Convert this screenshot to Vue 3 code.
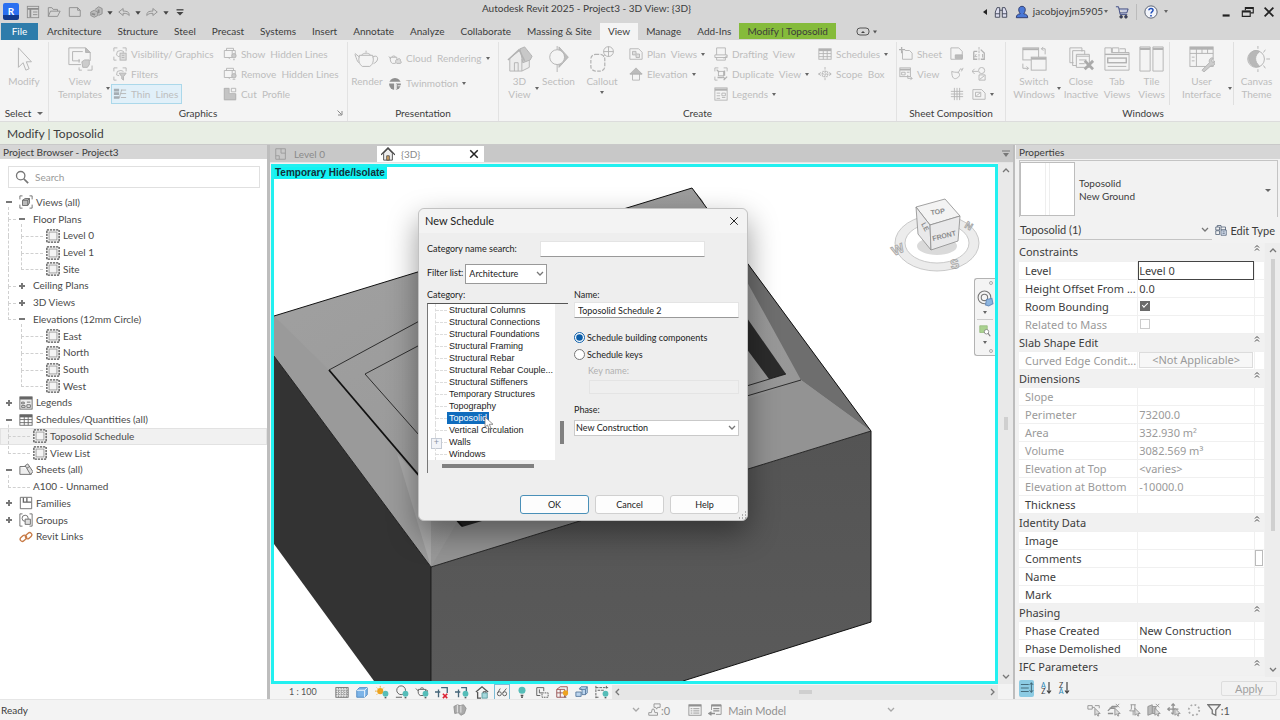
<template>
  <div class="app">
    <!-- title bar -->
    <header class="titlebar">
      <div class="quick">
        <button class="logo" aria-label="Revit">R</button>
        <button v-for="q in quick" :key="q.icon" class="flat" :class="q.cls" :aria-label="q.icon">
          <svg viewBox="0 0 16 16" v-html="icons[q.icon]"></svg>
        </button>
      </div>
      <div class="apptitle">Autodesk Revit 2025 - Project3 - 3D View: {3D}</div>
      <div class="account">
        <i class="left-arrow"></i>
        <button class="flat" aria-label="Find"><svg viewBox="0 0 16 16" v-html="icons.binoculars"></svg></button>
        <button class="flat user">
          <svg viewBox="0 0 16 16" v-html="icons.user"></svg>
          <span>jacobjoyjm5905</span><i class="caret"></i>
        </button>
        <button class="flat cart" aria-label="Cart"><svg viewBox="0 0 16 16" v-html="icons.cart"></svg></button>
        <i class="bar"></i>
        <button class="flat help" aria-label="Help"><svg viewBox="0 0 16 16" v-html="icons.help"></svg><i class="caret"></i></button>
        <div class="wincontrols">
          <button class="flat" aria-label="Minimize"><svg viewBox="0 0 16 16" v-html="icons.minimize"></svg></button>
          <button class="flat" aria-label="Restore"><svg viewBox="0 0 16 16" v-html="icons.restore"></svg></button>
          <button class="flat" aria-label="Close"><svg viewBox="0 0 16 16" v-html="icons.close"></svg></button>
        </div>
      </div>
    </header>

    <!-- ribbon tabs -->
    <nav class="tabs">
      <button v-for="t in tabs" :key="t" :class="{ file: t === 'File', active: t === activeTab, context: t === 'Modify | Toposolid' }" @click="activeTab = t">{{ t }}</button>
      <button class="collapse" aria-label="Collapse ribbon">
        <svg viewBox="0 0 22 10"><rect x="1" y="1" width="12" height="7" rx="3" fill="none" stroke="#555" /><path d="M5 6l2-2 2 2z" fill="#444" /><path d="M17 3.5h4l-2 3z" fill="#555" /></svg>
      </button>
    </nav>

    <!-- ribbon -->
    <section class="ribbon">
      <div v-for="g in groups" :key="g.name" class="group" :class="{ last: g.name === 'Windows' }" :style="{ flexBasis: g.w + 'px' }">
        <div class="cols">
          <div v-for="(c, i) in g.cols" :key="i" class="col" :class="[c.type, { ruled: c.ruled }]" :style="{ flexBasis: c.w + 'px' }">
            <button v-for="b in c.items" :key="b.icon" :class="{ on: b.on }" :aria-label="b.label || b.icon">
              <svg v-if="c.type.startsWith('big')" viewBox="0 0 28 28" v-html="icons[b.icon]"></svg>
              <svg v-else viewBox="0 0 16 16" v-html="icons[b.icon]"></svg>
              <span v-if="b.label">{{ b.label }}</span>
              <i v-if="b.caret" class="caret"></i>
            </button>
          </div>
        </div>
        <div class="gname">
          {{ g.name }}<i v-if="g.name === 'Select'" class="caret wide"></i>
          <svg v-if="g.name === 'Graphics'" class="launcher" viewBox="0 0 6 6"><path d="M.5 .5l4 4M5 1v4H1" fill="none" stroke="#888" /></svg>
        </div>
      </div>
    </section>

    <div class="options">Modify | Toposolid</div>

    <main class="work">
      <!-- project browser -->
      <aside class="browser">
        <h2>Project Browser - Project3</h2>
        <label class="search">
          <svg viewBox="0 0 16 16"><circle cx="6.5" cy="6.5" r="4.8" fill="none" stroke="#777" stroke-width="1.5" /><path d="M10 10l5 5" stroke="#777" stroke-width="2" /></svg>
          <input type="text" placeholder="Search" aria-label="Search">
        </label>
        <ul class="tree">
          <li v-for="n in nodes" :key="n.text" :class="['l' + n.level, { thru: n.thru, sel: n.sel }]">
            <b v-if="n.mark" :class="n.mark"></b>
            <svg v-if="n.icon" viewBox="0 0 16 16" v-html="icons[n.icon]"></svg>
            <span>{{ n.text }}</span>
          </li>
        </ul>
      </aside>

      <!-- drawing area -->
      <section class="viewarea">
        <div class="viewtabs">
          <button class="vt"><svg viewBox="0 0 16 16" v-html="icons.plan"></svg><span>Level 0</span></button>
          <button class="vt active"><svg viewBox="0 0 16 16" v-html="icons.home"></svg><span>{3D}</span><svg class="x" viewBox="0 0 16 16" v-html="icons.close"></svg></button>
          <svg class="more" viewBox="0 0 8 8"><path d="M0 1h8" stroke="#777" /><path d="M1 3h6L4 7z" fill="#777" stroke="none" /></svg>
        </div>
        <div class="viewrow">
          <div class="canvas">
            <svg class="model" viewBox="274 167 722 514" preserveAspectRatio="xMinYMin slice">
              <defs>
                <linearGradient id="top" x1="0" y1="0" x2="1" y2="1">
                  <stop offset="0" stop-color="#a2a2a2" /><stop offset="1" stop-color="#929292" />
                </linearGradient>
                <linearGradient id="front" x1="0" y1="0" x2="0" y2="1">
                  <stop offset="0" stop-color="#545454" /><stop offset="1" stop-color="#5a5a5a" />
                </linearGradient>
              </defs>
              <path d="M274 316L692 188 871 431 431 567 274 356z" fill="url(#top)" />
              <path d="M274 316L329 370 418 478 431 567 274 356z" fill="#9a9a9a" />
              <path d="M397 454L431 490V567z" fill="#a8a8a8" />
              <path d="M692 188L871 431 801 380 702 200z" fill="#6e6e6e" />
              <path d="M740 308L786 374 769 379 740 340z" fill="#2b2b2b" />
              <path d="M801 380L871 431 431 567 470 500z" fill="#939393" />
              <path d="M274 356L431 567V681H374L274 544z" fill="#333" />
              <path d="M431 567L871 431V622L683 681H431z" fill="url(#front)" />
              <path d="M454 518l8 9 20-6z" fill="#222" />
              <g fill="none" stroke="#111">
                <path d="M274 316L692 188 871 431V622L683 681" />
                <path d="M274 356L431 567 871 431M431 567V681" stroke-width=".8" />
                <path d="M460 299L329 370M801 380L740 398M786 374L740 388" stroke-width=".8" />
                <path d="M329 370L462 526" stroke-width="1.8" />
                <path d="M450 329L365 374 450 470" stroke-width=".8" />
              </g>
            </svg>
            <span class="badge">Temporary Hide/Isolate</span>

            <svg class="cube" viewBox="-8 0 104 84">
              <path fill-rule="evenodd" d="M4 46a42 28 0 1 0 84 0a42 28 0 1 0-84 0M14 46a32 20 0 1 1 64 0a32 20 0 1 1-64 0" fill="#ececec" stroke="#bdbdbd" stroke-width=".8" />
              <ellipse cx="46" cy="49" rx="20" ry="9" fill="#dadada" stroke="none" />
              <g fill="#e9e9ea" stroke="#8c8c8c" stroke-width=".8">
                <path d="M25 10L54 2 69 19 39 28z" fill="#f3f3f3" />
                <path d="M25 10L39 28 40 53 27 37z" />
                <path d="M39 28L69 19 67 44 40 53z" />
              </g>
              <g class="cubetext">
                <text x="40" y="18" transform="rotate(-8 40 18)">TOP</text>
                <text x="42" y="44" transform="rotate(-14 42 44)">FRONT</text>
                <text x="30" y="27" transform="rotate(62 30 27)">LE</text>
                <text x="3" y="59" class="dir" transform="rotate(-24 3 59)">W</text>
                <text x="60" y="72" class="dir" transform="rotate(-8 60 72)">S</text>
                <text x="73" y="30" class="dir small" transform="rotate(30 73 30)">N</text>
              </g>
            </svg>

            <div class="navbar">
              <i class="dot"></i>
              <button class="flat" aria-label="Steering wheel"><svg viewBox="0 0 16 16" v-html="icons.wheel"></svg></button>
              <i class="caret"></i><hr>
              <button class="flat zoom" aria-label="Zoom region"><svg viewBox="0 0 16 16" v-html="icons.zoom"></svg></button>
              <i class="caret"></i>
              <i class="dot"></i>
            </div>
          </div>
          <div class="vscroll"><svg viewBox="0 0 10 10" v-html="chevron.up"></svg><i></i><svg viewBox="0 0 10 10" v-html="chevron.down"></svg></div>
        </div>
        <div class="viewcontrols">
          <span class="scale">1 : 100</span>
          <button v-for="v in viewControls" :key="v" class="flat" :class="{ boxed: v === 'glasses' }" :aria-label="v"><svg viewBox="0 0 16 16" v-html="icons[v]"></svg></button>
          <div class="hscroll"><svg viewBox="0 0 10 10" v-html="chevron.left"></svg><i></i><svg viewBox="0 0 10 10" v-html="chevron.right"></svg></div>
        </div>
      </section>

      <!-- properties palette -->
      <aside class="props">
        <h2>Properties</h2>
        <div class="typebox">
          <div class="thumb"><i></i></div>
          <p>Toposolid<br>New Ground</p>
          <i class="caret wide"></i>
        </div>
        <div class="instance">
          <button class="pick"><span>Toposolid (1)</span><svg viewBox="0 0 10 10" v-html="chevron.down"></svg></button>
          <button class="edit"><svg viewBox="0 0 16 16" v-html="icons.edittype"></svg>Edit Type</button>
        </div>
        <div class="sheet">
          <table>
            <tbody>
              <tr v-for="p in params" :key="p.name" :class="{ head: p.head, dim: p.dim }">
                <th v-if="p.head" colspan="3"><div><span>{{ p.name }}</span><svg viewBox="0 0 6 8"><path d="M1 3.5l2-2 2 2M1 6.500l2-2 2 2" fill="none" stroke="#444" /></svg></div></th>
                <template v-else>
                  <td>{{ p.name }}</td>
                  <td>
                    <input v-if="p.check !== undefined" type="checkbox" :checked="p.check" :disabled="p.dim" :aria-label="p.name">
                    <input v-else-if="p.edit" v-model="p.value" type="text" :aria-label="p.name">
                    <button v-else-if="p.button" disabled>{{ p.value }}</button>
                    <template v-else>{{ p.value }}</template>
                  </td>
                  <td><button v-if="p.name === 'Comments'" class="tiny" aria-label="Browse comments"></button></td>
                </template>
              </tr>
            </tbody>
          </table>
          <div class="pscroll"><svg viewBox="0 0 10 10" v-html="chevron.up"></svg><i></i><svg viewBox="0 0 10 10" v-html="chevron.down"></svg></div>
        </div>
        <div class="pfoot">
          <button class="flat sorted" aria-label="Group"><svg viewBox="0 0 16 16" v-html="icons.group"></svg></button>
          <button class="flat az" aria-label="Sort ascending"><span><b>A</b>Z</span><svg viewBox="0 0 6 14" v-html="arrowDown"></svg></button>
          <button class="flat az" aria-label="Sort descending"><span>Z<b>A</b></span><svg viewBox="0 0 6 14" v-html="arrowDown"></svg></button>
          <button class="apply" disabled>Apply</button>
        </div>
      </aside>
    </main>

    <!-- status bar -->
    <footer class="status">
      <span class="ready">Ready</span>
      <svg viewBox="0 0 16 16" v-html="icons.workset"></svg>
      <div class="middle">
        <svg class="chev" viewBox="0 0 10 10" v-html="chevron.down"></svg>
        <svg viewBox="0 0 16 16" v-html="icons.stamp"></svg><span class="zero">:0</span>
        <svg viewBox="0 0 16 16" v-html="icons.list"></svg>
        <svg viewBox="0 0 16 16" v-html="icons.listarrow"></svg>
        <div class="option-set"><span>Main Model</span><svg class="chev" viewBox="0 0 10 10" v-html="chevron.down"></svg></div>
      </div>
      <div class="right">
        <svg v-for="s in statusIcons" :key="s" viewBox="0 0 16 16" v-html="icons[s]"></svg><span>:1</span>
      </div>
    </footer>

    <!-- new schedule dialog -->
    <form class="dialog" role="dialog" aria-label="New Schedule" @submit.prevent>
      <div class="dtitle"><span>New Schedule</span><button type="button" class="flat" aria-label="Close dialog"><svg viewBox="0 0 16 16"><path d="M3 3l10 10M13 3L3 13" stroke="#222" stroke-width="1.3" /></svg></button></div>
      <div class="drow"><label for="catsearch">Category name search:</label><input id="catsearch" type="text"></div>
      <div class="drow filter">
        <label for="filter">Filter list:</label>
        <span class="select"><select id="filter"><option>Architecture</option></select><svg viewBox="0 0 10 10" v-html="chevron.down"></svg></span>
      </div>
      <div class="dcols">
        <div class="dleft">
          <div id="catlabel">Category:</div>
          <div class="catbox">
            <div class="catrow">
              <ul aria-labelledby="catlabel">
                <li v-for="c in categories" :key="c" :class="{ sel: c === picked, plus: c === 'Walls' }" @click="picked = c"><span>{{ c }}</span></li>
              </ul>
              <i class="vthumb"></i>
            </div>
            <i class="hthumb"></i>
          </div>
        </div>
        <div class="dright">
          <label for="name">Name:</label>
          <input id="name" v-model="scheduleName" type="text">
          <label class="radio"><input v-model="kind" type="radio" value="components">Schedule building components</label>
          <label class="radio"><input v-model="kind" type="radio" value="keys">Schedule keys</label>
          <label for="key" class="off">Key name:</label>
          <input id="key" type="text" disabled>
          <label for="phase">Phase:</label>
          <span class="select"><select id="phase"><option>New Construction</option></select><svg viewBox="0 0 10 10" v-html="chevron.down"></svg></span>
        </div>
      </div>
      <div class="dbuttons">
        <button type="submit" class="ok">OK</button>
        <button type="button">Cancel</button>
        <button type="button">Help</button>
      </div>
      <svg class="grip" viewBox="0 0 9 9"><path d="M7 1h1M4 4h1M7 4h1M1 7h1M4 7h1M7 7h1" stroke="#999" stroke-width="1.5" /></svg>
      <svg class="cursor" viewBox="0 0 10 14"><path d="M1 1v10l2.5-2 1.7 4 1.8-.8-1.700-3.900H9z" fill="#fff" stroke="#777" stroke-width=".8" /></svg>
    </form>
  </div>
</template>

<script setup>
import { ref } from 'vue'

const activeTab = ref('View')
const picked = ref('Toposolid')
const scheduleName = ref('Toposolid Schedule 2')
const kind = ref('components')

const tabs = ['File', 'Architecture', 'Structure', 'Steel', 'Precast', 'Systems', 'Insert', 'Annotate', 'Analyze', 'Collaborate', 'Massing & Site', 'View', 'Manage', 'Add-Ins', 'Modify | Toposolid']

const quick = [
  { icon: 'panel' },
  { icon: 'open' },
  { icon: 'new' },
  { icon: 'sync' },
  { icon: 'caretdark', cls: 'slim' },
  { icon: 'undo' },
  { icon: 'caretdark2', cls: 'slim' },
  { icon: 'redo' },
  { icon: 'caretdark3', cls: 'slim' },
  { icon: 'customize' },
]

const chevron = {
  up: '<path d="M2 7l3-3 3 3" fill="none" stroke="#777" stroke-width="1.3"/>',
  down: '<path d="M2 3l3 3 3-3" fill="none" stroke="#777" stroke-width="1.3"/>',
  left: '<path d="M7 2L4 5l3 3" fill="none" stroke="#777" stroke-width="1.3"/>',
  right: '<path d="M3 2l3 3-3 3" fill="none" stroke="#777" stroke-width="1.3"/>',
}
const arrowDown = '<path d="M3 1v11M1 9.5l2 2.5 2-2.5" fill="none" stroke="#444" stroke-width="1.2"/>'

const bulb = '<circle cx="12" cy="10" r="3.3" fill="#56bdb8" stroke="none"/><path d="M11 14.5h2" stroke="#555" stroke-width="1.5"/>'
const frame = '<path d="M1 5V1h4M11 1h4v4M1 11v4h3" />'
const cell = '<rect x="1" y="1" width="14" height="14" fill="#f6f6f6" stroke="#555" stroke-width="1.5" stroke-dasharray="2.5 1"/><rect x="3.5" y="3.5" width="9" height="9" fill="#f4f4f4" stroke="#999"/>'
const caretDark = '<path d="M5 7h6l-3 4z" fill="#444" stroke="none"/>'
const pointer = '<path d="M9 6v8l2-1.5L12.500 15l1-.5-1-2.500H15z" fill="#ddd"/>'

const icons = {
  panel: '<rect x="1.500" y="1.500" width="13" height="13"/><path d="M1.500 4.500h13M5 5v9" stroke-width="2"/><path d="M8 8h5M8 11h5"/>',
  open: '<path d="M1.500 13V3h4l1.500 2h5v2M1.500 13L4 7h11l-3 6z"/>',
  new: '<path d="M1.500 13V3H11l3 3v7z"/><path d="M11 3v3h3"/>',
  sync: '<path d="M2 8l4-2 4 2v4l-4 2-4-2zM7 5l4-3 4 2v6l-4 2" fill="#bbb"/><path d="M3 10l4 1M11 5v4" stroke-width="2"/>',
  caretdark: caretDark,
  caretdark2: caretDark,
  caretdark3: caretDark,
  undo: '<path d="M14 12c0-4-2-5-7-5V4L2 8l5 4V9.500c4 0 5 .5 7 2.500z"/>',
  redo: '<path d="M2 12c0-4 2-5 7-5V4l5 4-5 4V9.500c-4 0-5 .5-7 2.500z"/>',
  customize: '<path d="M4 5.500h8" stroke="#444" stroke-width="1.500"/><path d="M4 8h8l-4 4z" fill="#444" stroke="none"/>',
  binoculars: '<path d="M1.500 14V8l2-5h3v11zM14.500 14V8l-2-5h-3v11zM6.500 6h3M1.500 10h5M9.500 10h5" stroke="#3a4052" fill="#dde"/>',
  user: '<path d="M1.500 14.500c0-3 1.500-4 4.500-4.500-3-4-2-8.500 2-8.500s5 4.500 2 8.500c3 .5 4.500 1.500 4.500 4.500z" fill="#4b78d6" stroke="#2a3566"/>',
  cart: '<path d="M1 2h3l2 9h8M4.500 4.500H15L13.500 9H5.500" stroke="#34407a" fill="#c5cbe0"/><circle cx="7" cy="13.500" r="1.500" fill="#34407a"/><circle cx="12.500" cy="13.500" r="1.500" fill="#34407a"/>',
  help: '<circle cx="8" cy="8" r="7" fill="#f2f4fa" stroke="#4a5366"/><path d="M5.500 6c.3-3 5-2.500 4.800 0C10.200 7.500 8 8 8 9.800M8 11.500v1.500" stroke="#1e4db8" stroke-width="1.800"/>',
  minimize: '<path d="M3 12h8" stroke="#222" stroke-width="2.500"/>',
  restore: '<path d="M5 6V3h9v6h-3" stroke="#222" stroke-width="1.300"/><path d="M1.500 7h9v6h-9z" stroke="#222" stroke-width="1.300"/><path d="M1.500 7.500h9M5 3.500h9" stroke="#222" stroke-width="2"/>',
  close: '<path d="M3 3l10 10M13 3L3 13" stroke="#222" stroke-width="2"/>',

  modify: '<path d="M8 2v21l5-5 3 8 3.500-1.500L16.500 17H22z"/>',
  templates: '<path d="M2 20V2h18l5 5v9M2 20h13M6 6h11M6 6v10h8"/><path d="M20 2v5h5z" fill="#bbb"/><path d="M16 17l3-2h5v5l-2 3h-5z" fill="#ccc"/><path d="M13 18v-4M27 21v5h-5M16 26h-3v-3"/>',
  visgraph: frame + '<path d="M4 9l1-4 4-1 3 1-1 4-5 2z"/><rect x="8" y="7" width="7" height="8" fill="#ddd"/><path d="M10 9.500h3M10 12h3"/>',
  filters: frame + '<path d="M4 9l1-4 4-1 3 1M4 9l3 1"/><path d="M7 7h8l-3 4v4l-2-1.500V11z" fill="#ccc"/>',
  thin: '<path d="M1 3.500h6M1 7.500h6M1 12h6" stroke="#a5adb3" stroke-width="3"/><path d="M9 3.500h6M9 7.500h6M9 12h6M7 13L10 3"/>',
  showhidden: '<path d="M4 4V1.500h8V4M1.500 4h9v8h-9zM10 4h4v7"/><path d="M6 12l2 2"/><circle cx="12.500" cy="10" r="2.500" fill="#ccc"/><path d="M11.500 14.500h2"/>',
  removehidden: '<path d="M4 4V1.500h8V4M1.500 4h9v8h-9zM10 4h4v7"/><path d="M6 12l2 2"/><circle cx="12.500" cy="10" r="2.500" fill="#ccc"/><path d="M11 14h3"/>',
  cut: '<path d="M1 1h6v7h8v7H1z" fill="#c4c4c4" stroke="none"/><path d="M9.500 1.500h5v4h-5z"/><path d="M1.500 14.500V1.500H7v6h7.500v7z"/>',

  render: '<path d="M6 10h14c2 6 0 10-3 12h-8c-3-2-5-6-3-12zM6 12L1 8M5 18c-2-2-2-4-4-9M20 12c6-4 8 4 1 7M8 10c2-3 8-3 10 0M13 7V5"/>',
  cloud: '<path d="M3 6h7c1 4 0 6-2 7H5C3 12 2 9 3 6zM3 8L1 5M4 6c1-2 4-2 5 0"/><path d="M9 12c-1-3 1-4 2-3 1-3 4-1 3 1 2 1 1 3 0 3h-4z" fill="#ddd"/>',
  twin: '<circle cx="8" cy="8" r="6.800" fill="#8f8f8f" stroke="none"/><path d="M1 6.500h14M8 6.500V15" stroke="#f4f4f4" stroke-width="2"/><path d="M9.500 8v6M11 10h4" stroke="#f4f4f4"/>',
  view3d: '<path d="M3 13v14h13l8-4V12L16 3z" fill="#ececec"/><path d="M14 3l5-2 8 10-2 4-8 3z" fill="#c8c8c8"/><path d="M1 15L13 4l6 12" stroke-width="1.500"/><path d="M16 27V14M8 27v-9h4v9"/>',
  section: '<path d="M14 1l10 11-10 11z" fill="#bdbdbd"/><circle cx="12" cy="12" r="8" fill="#f4f4f4"/><path d="M12 0v4M12 20v8"/>',
  callout: '<rect x="2" y="9" width="15" height="18" rx="5" stroke-dasharray="4 1.500" stroke-width="1.300"/><circle cx="21" cy="6" r="5.300"/><path d="M15.500 6h11M21 .5v11M17 10l-2 2"/>',
  planviews: '<path d="M1 2h10l4 4v8H1z"/><path d="M4 5h4v3h4v4H8V9H4z" fill="#ddd"/>',
  elevation: '<path d="M8 1l7 7H1z" fill="#bbb"/><path d="M4 8v7h8V8"/><path d="M1 8h14"/>',
  drafting: '<path d="M3 9V1h10v8M1 9h14v3H1z"/><path d="M3 12v3h10v-3"/><path d="M11 13l4-3"/>',
  duplicate: frame + '<rect x="5" y="5" width="6" height="5"/><path d="M4 12h6M12 4v6M11 15l4-4M3 3l3 3M13 14l-3-3" stroke-width="1.500"/>',
  legends: '<rect x="1" y="1" width="14" height="14"/><path d="M1 3h14" stroke-width="2.500"/><path d="M3 7h4M3 10h4M3 13h4M9 7h4v3H9zM9 12h4"/>',
  schedules: '<rect x="1" y="2" width="14" height="12"/><path d="M1 3.500h14" stroke-width="2.500"/><path d="M1 7.500h14M1 11h14M6 3v11M10.500 3v11"/>',
  scopebox: '<path d="M8 0v16M0 8h16" stroke-dasharray="3 1"/><rect x="5" y="5" width="6" height="6" stroke-dasharray="2 1"/><path d="M3 6l-2 2 2 2M13 6l2 2-2 2"/>',
  sheet: '<path d="M4 4v10h11V7l-3-3H7"/><path d="M3 0v7M0 3h7" stroke-width="1.500"/>',
  sheetview: '<rect x="1" y="1" width="12" height="10"/><path d="M1 3h12" stroke-width="2"/><path d="M3 6h4v3H3zM9 6h3M10 9v4h5M13 11l2 2-2 2"/>',
  titleblock: '<path d="M1 1h9l4 4v9H1z"/><path d="M6 9h8v4H6z" fill="#bbb"/>',
  revisions: '<path d="M2 5c0 8 3 10 7 7 3-2 2-5 0-6-3 0-5 0-7-1zM9 7l3-5 2 1M13 5l2-4"/>',
  guidegrid: '<path d="M5 1v14M11 1v14M1 5h14M1 11h14M8 1v14M1 8h14"/>',
  matchline: '<path d="M2 5v9h4M2 5h4M10 3l4 4v7h-4" stroke-width="1.500"/><path d="M8 0v16" stroke-dasharray="3 1"/><path d="M5 8l-2 3h3M12 8v4"/>',
  viewref: '<circle cx="11" cy="4" r="3.500"/><path d="M0 5h7M3 2L0 5l3 3M8 9h7v6H8zM9 14l5-4"/>',
  viewports: '<path d="M1 3h10l4 4v7H1z"/><path d="M4 6h6v5H4zM5 10l4-3"/>',
  switch: '<rect x="2" y="2" width="17" height="13"/><path d="M2 3.500h17" stroke-width="2"/><rect x="11" y="12" width="16" height="14" fill="#f4f4f4"/><path d="M11 13.500h16" stroke-width="2.500"/><path d="M22 3h4v6M2 19v5h6M6 22l2 2-2 2M24 1l-2 2 2 2"/>',
  closeinactive: '<path d="M2 2h13v4M2 2v16h4M5 5h13v4M5 5v16h4M9 9h14v14H9zM9 11h14M12 15h8M12 19h6"/><path d="M18 16l9 9M27 16l-9 9" stroke="#aaa" stroke-width="3"/>',
  tabviews: '<path d="M1 26V2h7v5h19v19zM9 7V2h7v5M17 3h6v4"/><path d="M1 9h26" stroke-width="1.500"/><rect x="4" y="13" width="20" height="5" stroke-width="1.500"/><path d="M4 22h20"/>',
  tileviews: '<path d="M1 1h11v26H1zM15 1h11v26H15z"/><path d="M1 3h11M15 3h11" stroke-width="2.500"/>',
  userinterface: '<rect x="1" y="1" width="25" height="21"/><path d="M1 2.500h25" stroke-width="3"/><path d="M1 8h25M8 3v19M14 3v5M20 3v5M3 12h3M3 16h3"/><path d="M14 26l8-8c-1-4 2-6 4-5l-2 3 2 2 2-2c1 4-2 6-4 5l-8 7z" fill="#ccc"/>',
  canvas: '<circle cx="13" cy="14" r="9"/><path d="M11 5a9 9 0 1 0 6 17c-6-5-6-12 0-16a9 9 0 0 0-6-1z" fill="#b8b8b8"/><path d="M15 0v3M23 4l-2 3M28 14h-4M23 24l-2-3M15 28v-3"/>',

  views: '<path d="M1 5V1h3M12 1h3v4M1 11v4h3M15 11v4h-3"/><path d="M4 6l3-2h5v5l-2 3H4z" fill="#bbb"/><path d="M4 6h6v6M10 6l2-2"/>',
  cell,
  legend2: '<rect x="1" y="1" width="14" height="14" fill="#eee"/><path d="M1 2.500h14" stroke-width="3"/><path d="M3 7h3v2H3zM9 7h4M3 11h4v2H3zM9 10h4v3H9z"/>',
  table2: '<rect x="1" y="2" width="14" height="12"/><path d="M1 3.500h14" stroke-width="3"/><path d="M1 7.500h14M1 11h14M6 3v11M10.500 3v11"/>',
  sheets2: '<path d="M1 4h7M1 4v9h13V9" fill="#eee"/><path d="M7 3l3-2 6 9-3 3z" fill="#ddd"/><path d="M9 6l3-2"/>',
  families: '<path d="M1.500 1.500v13h13v-13z"/><path d="M5 2v5h9M9 7V2" stroke-width="1.500"/>',
  groups: '<path d="M4 1H1v14h3M12 1h3v14h-3"/><circle cx="7" cy="6" r="3.500"/><path d="M7 7h6v6H7z" fill="#ddd"/>',
  links: '<g stroke="#c77a45" stroke-width="1.500"><rect x="1" y="7" width="8" height="5" rx="2.500" transform="rotate(-42 5 9.500)"/><rect x="7" y="4" width="8" height="5" rx="2.500" transform="rotate(-42 11 6.500)"/></g>',
  plan: '<path d="M2 2h11v12H2zM8 2v5h5M2 10h4v4" stroke="#999"/>',
  home: '<path d="M3 7v8h10V7L8 2z" fill="#eee" stroke="#444"/><path d="M0 9l8-8 8 8" stroke="#444" stroke-width="1.500"/><path d="M6.500 10h3v5h-3z" fill="#d9a35c" stroke="#555"/>',
  wheel: '<circle cx="7" cy="7" r="6"/><circle cx="7" cy="7" r="3"/><path d="M9 9l5-1 1 5-4 2-3-1z" fill="#8db5df" stroke="#6b8fbd"/>',
  zoom: '<path d="M1 1h10v9H1z" fill="#a9d18e" stroke="#93b97a"/><circle cx="10" cy="9" r="3" fill="#fff"/><path d="M12 11l3 4" stroke-width="1.500"/>',
  edittype: '<g stroke="#4a5a70"><path d="M1 4h5v4H1zM1 9h5v5H1zM3 4V2h5v2"/><path d="M8 4h6v4H8z"/><path d="M8 8h7v7H8z" fill="#dfe8f5"/><path d="M10 10.500h3M10 12.500h3"/></g>',
  group: '<path d="M1 4h9M1 8h9M1 12h9M13 2v11M11 4.500l2-2.500 2 2.500M11 10.500l2 2.500 2-2.500" stroke="#3b5e6c"/>',

  detail: '<rect x="1" y="3" width="14" height="11" fill="#eee" stroke="#666"/><path d="M1 6h14M1 8.500h14M1 11h14M4 3v11M7 3v11M10 3v11M13 3v11" stroke="#777" stroke-width=".8" stroke-dasharray="2 1"/>',
  visual: '<path d="M2 6l3-3h9v8l-3 3H2z" fill="#7cb4e8" stroke="#4b86bf"/><path d="M2 6h9v8M11 6l3-3" stroke="#fff"/>',
  sun: '<circle cx="6" cy="7" r="3.500" fill="#eda31f" stroke="none"/><path d="M6 1v2M0 7h2M2 3l1 1M10 3L9 4M2 11l1-1" stroke="#eda31f"/>' + bulb,
  shadow: '<circle cx="7" cy="6" r="5"/><path d="M1 14h7"/>' + bulb,
  pot: '<path d="M4 5h8c1 4 0 6-2 7H6C4 11 3 9 4 5zM4 7L1 4M6 4c1-1 3-1 4 0M12 6c3-1 3 2 1 3"/>' + bulb,
  crop: '<path d="M4 5v9M0 8h6M7 3h7v6" stroke="#45667a" stroke-width="1.500"/><path d="M9 10l5 5M14 10l-5 5" stroke="#d23" stroke-width="1.800"/>',
  cropshow: '<path d="M4 5v9M0 8h6M7 3h6v4" stroke="#45667a" stroke-width="1.500"/>' + bulb,
  lock: '<path d="M1 8l7-6 7 6M3 8v7h4" stroke-width="1.500"/><path d="M8 9h6v6H8z" fill="#a5d8dc" stroke="#5b9ca0"/><path d="M9.500 9V7.500h3V9"/>',
  glasses: '<circle cx="5" cy="10" r="2.300"/><circle cx="11" cy="10" r="2.300"/><path d="M3 9l3-5M9 9l4-5"/>',
  reveal: '<circle cx="8" cy="6" r="4" fill="#56bdb8" stroke="none"/><path d="M6.500 12h3M7 14h2" stroke="#555" stroke-width="1.500"/>',
  worksharing: '<path d="M2 3h8v4M2 3v9h4M5 5v4h3"/><path d="M8 9h7v5H8z" stroke-dasharray="2 1"/>',
  analytical: '<path d="M2 5l4-3h8v8l-3 4H2zM2 5h9v9M6 5v9M2 9h9" stroke="#964b4b"/><circle cx="12" cy="9" r="3" fill="#eda31f" stroke="none"/><path d="M11 14h2"/>',
  displaced: '<path d="M1 8h6v5H1zM5 4l2-2h7v7l-2 2H8V5z" fill="#bcd5ee" stroke="#56779c"/><path d="M5 5h7v6M12 5l2-3" stroke="#56779c"/>',
  constraints: '<path d="M1 3h14M1 1v14M1 14h3M3 6h7M13 1v4" stroke-dasharray="3 1"/>' + bulb,

  workset: '<path d="M1 4l4-2 3 1 4-1 3 4-2 6-4 2-3-3-4 1z" fill="#aaa"/><path d="M5 2v9M9 3v8" stroke="#eee"/>',
  stamp: '<path d="M2 14h10v-3H9l-1-4H6l-1 4H2z"/><path d="M8 1h7v4h-3l-1 2-1-2H8z"/>',
  list: '<rect x="1" y="2" width="14" height="12"/><path d="M1 3h14" stroke-width="2"/><path d="M3 6.500h2M3 9h2M3 11.500h2M6 6.500h7M6 9h7M6 11.500h7"/>',
  listarrow: '<path d="M4 8V2h11v11H9"/><path d="M4 3h11" stroke-width="2"/><path d="M6 6.500h7M6 9h7M1 12h7M4 10l-3 2 3 2" stroke-width="1.500"/>',
  sellinks: '<path d="M1 3h5v4H1zM6 5h3M9 3h5v3"/>' + pointer,
  selunder: '<path d="M1 9l5-5h6M1 12h6M3 6h6" stroke-width="1.500"/><path d="M10 1l4 4M14 1l-4 4"/>' + pointer,
  selpin: '<path d="M4 2h6M5 2v5L3 9h8L9 7V2M7 9v5"/>' + pointer,
  selface: '<path d="M1 4l5-2v10l-5 2zM6 4h4v8H6" fill="#bbb"/><path d="M10 1l4 4M14 1l-4 4"/>' + pointer,
  seldrag: '<path d="M7 1v12M1 7h12M5 3l2-2 2 2M3 5L1 7l2 2M5 11l2 2" stroke-width="1.500"/>' + pointer,
  progress: '<circle cx="8" cy="8" r="6" stroke-width="2" stroke-dasharray="2 2.700" stroke="#aaa"/>',
  filter: '<path d="M1 2h14l-5 6v6l-4-2V8z" stroke="#777" stroke-width="1.500"/>',
}

const groups = [
  { name: 'Select', w: 49, cols: [{ type: 'big', w: 48, items: [{ icon: 'modify', label: 'Modify' }] }] },
  { name: 'Graphics', w: 299, cols: [
    { type: 'big', w: 62, items: [{ icon: 'templates', label: 'View Templates', caret: true }] },
    { type: 'small', w: 110, items: [{ icon: 'visgraph', label: 'Visibility/ Graphics' }, { icon: 'filters', label: 'Filters' }, { icon: 'thin', label: 'Thin  Lines', on: true }] },
    { type: 'small', w: 122, items: [{ icon: 'showhidden', label: 'Show  Hidden Lines' }, { icon: 'removehidden', label: 'Remove  Hidden Lines' }, { icon: 'cut', label: 'Cut  Profile' }] },
  ] },
  { name: 'Presentation', w: 151, cols: [
    { type: 'big', w: 38, items: [{ icon: 'render', label: 'Render' }] },
    { type: 'small loose', w: 110, items: [{ icon: 'cloud', label: 'Cloud  Rendering', caret: true }, { icon: 'twin', label: 'Twinmotion', caret: true }] },
  ] },
  { name: 'Create', w: 398, cols: [
    { type: 'big', w: 41, items: [{ icon: 'view3d', label: '3D View', caret: true }] },
    { type: 'big', w: 37, items: [{ icon: 'section', label: 'Section' }] },
    { type: 'big under', w: 50, items: [{ icon: 'callout', label: 'Callout', caret: true }] },
    { type: 'small', w: 85, items: [{ icon: 'planviews', label: 'Plan  Views', caret: true }, { icon: 'elevation', label: 'Elevation', caret: true }] },
    { type: 'small', w: 104, items: [{ icon: 'drafting', label: 'Drafting  View' }, { icon: 'duplicate', label: 'Duplicate  View', caret: true }, { icon: 'legends', label: 'Legends', caret: true }] },
    { type: 'small', w: 78, items: [{ icon: 'schedules', label: 'Schedules', caret: true }, { icon: 'scopebox', label: 'Scope  Box' }] },
  ] },
  { name: 'Sheet Composition', w: 109, cols: [
    { type: 'small', w: 51, items: [{ icon: 'sheet', label: 'Sheet' }, { icon: 'sheetview', label: 'View' }] },
    { type: 'small', w: 22, items: [{ icon: 'titleblock' }, { icon: 'revisions' }, { icon: 'guidegrid' }] },
    { type: 'small', w: 30, items: [{ icon: 'matchline' }, { icon: 'viewref' }, { icon: 'viewports', caret: true }] },
  ] },
  { name: 'Windows', w: 274, cols: [
    { type: 'big', w: 56, items: [{ icon: 'switch', label: 'Switch Windows', caret: true }] },
    { type: 'big', w: 38, items: [{ icon: 'closeinactive', label: 'Close Inactive' }] },
    { type: 'big', w: 34, items: [{ icon: 'tabviews', label: 'Tab Views' }] },
    { type: 'big', w: 36, ruled: true, items: [{ icon: 'tileviews', label: 'Tile Views' }] },
    { type: 'big', w: 64, ruled: true, items: [{ icon: 'userinterface', label: 'User Interface', caret: true }] },
    { type: 'big', w: 45, items: [{ icon: 'canvas', label: 'Canvas Theme' }] },
  ] },
]

const nodes = [
  { level: 0, mark: 'minus', icon: 'views', text: 'Views (all)' },
  { level: 1, mark: 'minus', text: 'Floor Plans' },
  { level: 2, icon: 'cell', text: 'Level 0', thru: true },
  { level: 2, icon: 'cell', text: 'Level 1', thru: true },
  { level: 2, icon: 'cell', text: 'Site', thru: true },
  { level: 1, mark: 'plus', text: 'Ceiling Plans' },
  { level: 1, mark: 'plus', text: '3D Views' },
  { level: 1, mark: 'minus', text: 'Elevations (12mm Circle)' },
  { level: 2, icon: 'cell', text: 'East' },
  { level: 2, icon: 'cell', text: 'North' },
  { level: 2, icon: 'cell', text: 'South' },
  { level: 2, icon: 'cell', text: 'West' },
  { level: 0, mark: 'plus', icon: 'legend2', text: 'Legends' },
  { level: 0, mark: 'minus', icon: 'table2', text: 'Schedules/Quantities (all)' },
  { level: 3, icon: 'cell', text: 'Toposolid Schedule', sel: true },
  { level: 3, icon: 'cell', text: 'View List' },
  { level: 0, mark: 'minus', icon: 'sheets2', text: 'Sheets (all)' },
  { level: 3, text: 'A100 - Unnamed' },
  { level: 0, mark: 'plus', icon: 'families', text: 'Families' },
  { level: 0, mark: 'plus', icon: 'groups', text: 'Groups' },
  { level: 0, mark: 'none', icon: 'links', text: 'Revit Links' },
]

const params = ref([
  { name: 'Constraints', head: true },
  { name: 'Level', value: 'Level 0', edit: true },
  { name: 'Height Offset From ...', value: '0.0' },
  { name: 'Room Bounding', check: true },
  { name: 'Related to Mass', check: false, dim: true },
  { name: 'Slab Shape Edit', head: true },
  { name: 'Curved Edge Condit...', value: '<Not Applicable>', button: true, dim: true },
  { name: 'Dimensions', head: true },
  { name: 'Slope', dim: true },
  { name: 'Perimeter', value: '73200.0', dim: true },
  { name: 'Area', value: '332.930 m²', dim: true },
  { name: 'Volume', value: '3082.569 m³', dim: true },
  { name: 'Elevation at Top', value: '<varies>', dim: true },
  { name: 'Elevation at Bottom', value: '-10000.0', dim: true },
  { name: 'Thickness' },
  { name: 'Identity Data', head: true },
  { name: 'Image' },
  { name: 'Comments' },
  { name: 'Name' },
  { name: 'Mark' },
  { name: 'Phasing', head: true },
  { name: 'Phase Created', value: 'New Construction' },
  { name: 'Phase Demolished', value: 'None' },
  { name: 'IFC Parameters', head: true },
])

const viewControls = ['detail', 'visual', 'sun', 'shadow', 'pot', 'crop', 'cropshow', 'lock', 'glasses', 'reveal', 'worksharing', 'analytical', 'displaced', 'constraints']
const statusIcons = ['sellinks', 'selunder', 'selpin', 'selface', 'seldrag', 'progress', 'filter']
const categories = ['Structural Columns', 'Structural Connections', 'Structural Foundations', 'Structural Framing', 'Structural Rebar', 'Structural Rebar Couple...', 'Structural Stiffeners', 'Temporary Structures', 'Topography', 'Toposolid', 'Vertical Circulation', 'Walls', 'Windows']
</script>

<style>
body {
  margin: 0;
}
</style>

<style scoped>
* {
  box-sizing: border-box;
}
.app {
  position: relative;
  display: flex;
  flex-direction: column;
  height: 100vh;
  overflow: hidden;
  background: #f3f3f3;
  color: #3c3c3c;
  font: 10px/13px Lato, "Noto Sans", sans-serif;
}
button, input, select {
  margin: 0;
  padding: 0;
  border: 0;
  background: none;
  color: inherit;
  font: inherit;
}
svg {
  flex: none;
  display: block;
  fill: none;
  stroke: currentColor;
}
ul, h2, p {
  margin: 0;
  padding: 0;
  list-style: none;
  font-size: inherit;
  font-weight: normal;
}
.flat {
  display: flex;
  align-items: center;
}
.flat svg {
  width: 14px;
  height: 14px;
}
.caret {
  flex: none;
  border: 2px solid transparent;
  border-top: 3px solid #666;
  border-bottom: 0;
}
.caret.wide {
  border-width: 3px 3px 0;
}

/* title bar */
.titlebar {
  display: grid;
  grid-template-columns: 9fr auto 11fr;
  align-items: center;
  height: 23px;
  background: #d6d6d6;
}
.quick {
  display: flex;
  align-items: center;
  gap: 7px;
  padding-left: 3px;
  color: #8c8c8c;
}
.quick .slim {
  width: 6px;
  margin: 0 -3px;
}
.quick .slim svg {
  margin: 0 -4px;
}
.logo {
  width: 16px;
  height: 17px;
  border-radius: 2px;
  background: linear-gradient(#2a6ff0 70%, #123a8c 70%);
  color: #fff;
  font-weight: bold;
}
.apptitle {
  padding-bottom: 6px;
}
.account {
  display: flex;
  align-items: center;
  justify-content: flex-end;
  gap: 7px;
  padding-right: 4px;
}
.left-arrow {
  border: 3px solid transparent;
  border-right: 4px solid #222;
  border-left: 0;
}
.user {
  gap: 4px;
}
.user .caret {
  margin-left: -3px;
}
.bar {
  width: 1px;
  height: 16px;
  background: #bbb;
}
.help {
  gap: 6px;
}
.wincontrols {
  display: flex;
  gap: 7px;
  margin-left: 45px;
}

/* ribbon tabs */
.tabs {
  display: flex;
  align-items: stretch;
  height: 17px;
  background: #d6d6d6;
}
.tabs button {
  padding: 0 8px;
  white-space: nowrap;
}
.tabs .file {
  width: 37px;
  margin: 0 1px;
  background: #2e7cab;
  color: #fff;
}
.tabs .active {
  background: #f4f4f4;
}
.tabs .context {
  height: 16px;
  padding: 0 8px;
  background: #85bb3b;
}
.tabs .collapse {
  padding: 0 20px;
}
.collapse svg {
  width: 22px;
  height: 10px;
  stroke: none;
}

/* ribbon */
.ribbon {
  display: flex;
  height: 82px;
  background: #f4f4f4;
  border-bottom: 1px solid #dcdcdc;
}
.group {
  flex: none;
  display: flex;
  flex-direction: column;
  margin-top: 2px;
  border-right: 1px solid #e2e2e2;
}
.group.last {
  flex-grow: 1;
  border-right: 0;
}
.cols {
  flex: 1;
  display: flex;
}
.col {
  flex: none;
  display: flex;
  flex-direction: column;
  color: #bdbdbd;
}
.col svg {
  color: #b2b2b2;
}
.col.ruled {
  border-right: 1px solid #dfdfdf;
}
.big button {
  position: relative;
  display: flex;
  flex-direction: column;
  align-items: center;
  gap: 3px;
  padding-top: 4px;
}
.big span {
  width: min-content;
}
.big svg {
  width: 26px;
  height: 26px;
}
.big .caret {
  position: absolute;
  right: 1px;
  bottom: 11px;
}
.under .caret {
  position: static;
}
.small {
  padding-left: 1px;
}
.small button {
  display: flex;
  align-items: center;
  align-self: flex-start;
  gap: 4px;
  height: 18px;
  margin: 3px 0 -1px;
  padding: 0 1px;
  white-space: pre;
}
.small.loose button {
  height: 25px;
  margin: 4px 0 -4px;
}
.small svg {
  width: 14px;
  height: 14px;
}
.small .on {
  padding: 0 3px 0 1px;
  background: #e1f0f9;
  outline: 1px solid #abd8ea;
}
.gname {
  position: relative;
  display: flex;
  justify-content: center;
  align-items: center;
  gap: 6px;
  height: 16px;
}
.launcher {
  position: absolute;
  right: 4px;
  width: 6px;
  height: 6px;
}
.options {
  height: 23px;
  padding: 0 7px;
  border-bottom: 1px solid #c9c9c9;
  background: #e8eee4;
  font-size: 12px;
  line-height: 23px;
}

.work {
  flex: 1;
  display: flex;
  min-height: 0;
}

/* project browser */
.browser {
  flex: none;
  width: 270px;
  border-right: 3px solid #bdbdbd;
  background: #fff;
}
.browser h2, .props h2 {
  height: 14px;
  padding-left: 3px;
  background: #d6d6d6;
  line-height: 15px;
}
.search {
  display: flex;
  align-items: center;
  gap: 6px;
  height: 22px;
  margin: 7px 7px 6px 8px;
  padding: 0 6px;
  border: 1px solid #e0e0e0;
}
.search svg {
  width: 14px;
  height: 14px;
}
.search input {
  flex: 1;
  outline: 0;
}
.search input::placeholder {
  color: #9a9a9a;
}
.tree {
  display: flex;
  flex-direction: column;
  height: 351px;
}
.tree li {
  position: relative;
  flex: 1;
  display: flex;
  align-items: center;
  gap: 3px;
  padding-left: 5px;
  color: #4a4a4a;
}
.tree svg {
  width: 14px;
  height: 14px;
  color: #666;
}
.tree .l1 {
  padding-left: 18px;
  gap: 7px;
}
.tree .l2 {
  padding-left: 46px;
}
.tree .l3 {
  padding-left: 33px;
}
.tree .sel {
  background: #f1f1f1;
  outline: 1px solid #e2e2e2;
  outline-offset: -1px;
}
.tree b {
  position: relative;
  z-index: 1;
  flex: none;
  width: 8px;
  height: 8px;
  background: #fff;
}
.tree .l0 b {
  margin-right: 3px;
}
.tree b.minus::before, .tree b.plus::before, .tree b.plus::after {
  content: "";
  position: absolute;
  top: 3px;
  left: 1px;
  width: 6px;
  height: 2px;
  background: #777;
}
.tree b.plus::after {
  top: 1px;
  left: 3px;
  width: 2px;
  height: 6px;
}
.tree .l1::before, .tree .l2::before, .tree .l3::before {
  content: "";
  position: absolute;
  top: -50%;
  left: 8px;
  width: 7px;
  height: 100%;
  border: dashed #d0d0d0;
  border-width: 0 0 1px 1px;
}
.tree .l2::before {
  left: 21px;
  width: 21px;
}
.tree .l3::before {
  width: 21px;
}
.tree .thru::after {
  content: "";
  position: absolute;
  top: -50%;
  left: 8px;
  height: 100%;
  border-left: 1px dashed #d0d0d0;
}

/* drawing area */
.viewarea {
  flex: 1;
  display: flex;
  flex-direction: column;
  min-width: 0;
}
.viewtabs {
  display: flex;
  align-items: stretch;
  height: 18px;
  padding: 1px 3px 0 0;
  border-bottom: 1px solid #e4e4e4;
  background: #c8c8c8;
}
.vt {
  display: flex;
  align-items: center;
  gap: 6px;
  width: 107px;
  padding: 0 4px;
  color: #8a8a8a;
}
.vt.active {
  background: #fff;
}
.vt svg {
  width: 14px;
  height: 14px;
}
.vt .x {
  width: 12px;
  height: 12px;
  margin-left: auto;
}
.more {
  width: 8px;
  height: 8px;
  margin: 4px 0 0 auto;
}
.viewrow {
  flex: 1;
  display: flex;
  min-height: 0;
}
.canvas {
  position: relative;
  flex: 1;
  min-width: 0;
  margin: 1px 0 0 1px;
  border: 3px solid #22f0f0;
  background: #fff;
  overflow: hidden;
}
.model {
  width: 100%;
  height: 100%;
  stroke: none;
}
.badge {
  position: absolute;
  top: 0;
  left: 0;
  padding: 0 2px 0 1px;
  background: #12f3f3;
  color: #10303a;
  font: bold 10px/12px "Liberation Sans", Arial, sans-serif;
}
.cube {
  position: absolute;
  top: 30px;
  right: 8px;
  width: 104px;
  height: 84px;
}
.cubetext {
  fill: #8a8a8a;
  stroke: none;
  font: bold 7px "Liberation Sans", Arial, sans-serif;
}
.cubetext .dir {
  font-size: 13px;
  fill: #e6e6e6;
  stroke: #a5a5a5;
  stroke-width: 0.8px;
}
.cubetext .small {
  font-size: 10px;
}
.navbar {
  position: absolute;
  top: 111px;
  right: 0;
  display: flex;
  flex-direction: column;
  align-items: center;
  justify-content: space-between;
  width: 21px;
  height: 78px;
  padding: 2px;
  border: 1px solid #b3b3b3;
  border-right: 0;
  border-radius: 3px 0 0 3px;
  background: #f4f4f4;
  color: #777;
}
.navbar .flat svg {
  width: 17px;
  height: 17px;
}
.navbar .zoom svg {
  width: 12px;
  height: 12px;
}
.navbar hr {
  width: 100%;
  margin: 0;
  border: 0;
  border-top: 1px solid #ccc;
}
.dot {
  align-self: flex-end;
  width: 4px;
  height: 4px;
  border: 1px solid #aaa;
  border-radius: 2px;
}
.vscroll, .pscroll {
  flex: none;
  display: flex;
  flex-direction: column;
  justify-content: space-between;
  align-items: center;
  width: 15px;
  padding: 2px 0;
  background: #e9e9e9;
}
.vscroll svg, .pscroll svg, .hscroll svg {
  width: 10px;
  height: 10px;
}
.vscroll i {
  width: 4px;
  height: 13px;
  background: #cfcfcf;
}
.viewcontrols {
  display: flex;
  align-items: center;
  height: 15px;
  margin-right: 15px;
  background: #f4f4f4;
  color: #555;
}
.scale {
  width: 62px;
  padding-left: 19px;
  font-size: 9px;
}
.viewcontrols .flat {
  flex: none;
  justify-content: center;
  width: 20px;
  height: 14px;
}
.viewcontrols .boxed svg {
  outline: 1px solid #7cbcd6;
}
.hscroll {
  flex: 1;
  display: flex;
  align-items: center;
  justify-content: space-between;
  height: 14px;
  background: #e6e6e6;
}
.hscroll i {
  width: 13px;
  height: 4px;
  background: #cfcfcf;
}

/* properties palette */
.props {
  flex: none;
  display: flex;
  flex-direction: column;
  width: 267px;
  padding-left: 1px;
  border-left: 2px solid #bdbdbd;
  background: #f2f2f2;
}
.typebox {
  display: flex;
  align-items: flex-start;
  height: 57px;
  margin: 1px 2px 0 3px;
  padding: 1px 6px 0 0;
  border: 1px solid #c4c4c4;
  border-bottom: 0;
}
.thumb {
  display: flex;
  justify-content: center;
  width: 55px;
  height: 54px;
  border: 1px solid #bdbdbd;
  background: #fff;
}
.thumb i {
  width: 5px;
  border: solid #eee;
  border-width: 0 1px;
}
.typebox p {
  flex: 1;
  padding: 15px 0 0 4px;
}
.typebox .caret {
  margin-top: 27px;
}
.instance {
  display: flex;
  align-items: center;
  height: 26px;
  padding: 0 5px 0 2px;
  font-size: 11px;
}
.pick {
  flex: 1;
  display: flex;
  align-items: center;
  justify-content: space-between;
  height: 20px;
  padding: 0 2px;
  border-bottom: 1px solid #c4c4c4;
}
.pick svg {
  width: 10px;
  height: 10px;
}
.edit {
  display: flex;
  align-items: center;
  gap: 3px;
  padding-left: 3px;
}
.edit svg {
  width: 12px;
  height: 12px;
}
.sheet {
  flex: 1;
  display: flex;
  min-height: 0;
  padding-left: 3px;
  overflow: hidden;
}
.sheet table {
  flex: 1;
  align-self: flex-start;
  border-collapse: collapse;
  table-layout: fixed;
  background: #fff;
  font: 11px/15px "Noto Sans", sans-serif;
}
.sheet td, .sheet th {
  height: 18px;
  padding: 0 1px;
  border: 0 solid #f0f0f0;
  border-width: 0 1px 1px 0;
  font-weight: normal;
  text-align: left;
  white-space: nowrap;
}
.sheet td:first-child {
  width: 118px;
  padding-left: 6px;
}
.sheet td:last-child {
  width: 10px;
  padding: 0;
}
.sheet .head th {
  padding: 0 4px 0 0;
  background: #f1f1f1;
}
.head div {
  display: flex;
  justify-content: space-between;
}
.head svg {
  width: 6px;
  height: 8px;
}
.dim {
  color: #9a9a9a;
}
.sheet input[type="text"] {
  display: block;
  width: 100%;
  height: 17px;
  outline: 1px solid #444;
}
.sheet input[type="checkbox"] {
  position: relative;
  display: block;
  width: 10px;
  height: 10px;
  margin-left: 1px;
  border: 1px solid #ccc;
  background: #fff;
  appearance: none;
}
.sheet input[type="checkbox"]:checked {
  border-color: #6a6a6a;
  background: #6a6a6a;
}
.sheet input[type="checkbox"]:checked::after {
  content: "";
  position: absolute;
  top: 1px;
  left: 1px;
  width: 5px;
  height: 2px;
  border: solid #fff;
  border-width: 0 0 1px 1px;
  transform: rotate(-45deg);
}
.sheet td > button:disabled {
  display: block;
  width: 100%;
  height: 16px;
  border: 1px solid #dcdcdc;
  background: #f7f7f7;
  line-height: 14px;
}
.sheet .tiny {
  display: block;
  width: 8px;
  height: 16px;
  border: 1px solid #bbb;
}
.pscroll {
  justify-content: flex-start;
  background: #ededed;
}
.pscroll i {
  width: 4px;
  height: 272px;
  margin-top: 4px;
  background: #d0d0d0;
}
.pscroll svg:last-child {
  margin-top: auto;
}
.pfoot {
  display: flex;
  align-items: center;
  gap: 7px;
  height: 22px;
  padding: 0 3px;
}
.sorted {
  justify-content: center;
  width: 15px;
  height: 17px;
  border-radius: 2px;
  background: #8ccbe3;
}
.az span {
  display: flex;
  flex-direction: column;
  font-size: 7px;
  line-height: 6px;
}
.az b {
  color: #2c87b5;
  font-weight: normal;
}
.az svg {
  width: 6px;
}
.apply {
  width: 56px;
  height: 15px;
  margin-left: auto;
  border: 1px solid #ddd;
  border-radius: 2px;
  color: #a0a0a0;
  font-size: 11px;
  line-height: 13px;
}

/* status bar */
.status {
  display: flex;
  align-items: center;
  height: 21px;
  border-top: 1px solid #e6e6e6;
  color: #909090;
  font-size: 11px;
}
.status svg {
  width: 14px;
  height: 14px;
}
.ready {
  flex: 0 1 453px;
  padding-left: 1px;
  color: #3c3c3c;
  font-size: 10px;
}
.middle {
  flex: 1;
  display: flex;
  align-items: center;
  gap: 6px;
  padding-left: 164px;
}
.status .chev {
  width: 10px;
  height: 10px;
  opacity: 0.6;
}
.zero {
  margin: 0 12px 0 -6px;
}
.option-set {
  display: flex;
  align-items: center;
  justify-content: space-between;
  width: 168px;
}
.right {
  display: flex;
  align-items: center;
  gap: 6px;
  padding-right: 50px;
}
.right span {
  margin-left: -6px;
  color: #555;
}

/* dialog */
.dialog {
  position: absolute;
  top: 208px;
  left: 418px;
  width: 330px;
  border: 1px solid #c2c2c2;
  border-radius: 6px;
  background: #eee;
  box-shadow: 0 12px 30px rgba(0, 0, 0, 0.4);
  color: #222;
  font: 9px/12px Lato, "Noto Sans", sans-serif;
}
.dtitle {
  display: flex;
  align-items: center;
  justify-content: space-between;
  height: 24px;
  padding: 0 7px 0 6px;
  border-radius: 6px 6px 0 0;
  background: #f3f3f3;
  font-size: 11px;
}
.dtitle svg {
  width: 12px;
  height: 12px;
}
.drow {
  display: flex;
  align-items: center;
  height: 16px;
  margin: 8px 8px 0;
}
.drow label {
  width: 113px;
}
.drow input {
  width: 165px;
  height: 16px;
}
.dialog input[type="text"] {
  padding: 0 3px;
  border: 1px solid #e4e4e4;
  border-bottom-color: #999;
  background: #fff;
  outline: 0;
}
.drow.filter {
  align-items: flex-start;
  height: 20px;
  margin-top: 7px;
}
.filter label {
  width: auto;
  margin-right: 2px;
  line-height: 17px;
}
.select {
  position: relative;
  display: block;
}
.select select {
  display: block;
  width: 100%;
  height: 16px;
  padding: 0 1px;
  border: 1px solid #c9c9c9;
  background: #fff;
  appearance: none;
}
.select svg {
  position: absolute;
  top: 3px;
  right: 2px;
  width: 10px;
  height: 10px;
}
.filter .select {
  width: 82px;
}
.filter select {
  height: 20px;
  padding: 0 3px;
  border-color: #999;
}
.filter .select svg {
  top: 5px;
}
.dcols {
  display: flex;
  gap: 6px;
  margin: 5px 8px 0;
}
.dleft {
  width: 141px;
}
.catbox {
  height: 170px;
  margin-top: 2px;
  border-top: 1px solid #555;
  border-left: 1px solid #777;
}
.catrow {
  display: flex;
}
.catrow ul {
  width: 127px;
  padding-left: 7px;
  background: #fff;
  font-family: "Liberation Sans", Arial, sans-serif;
  white-space: nowrap;
}
.catrow li {
  position: relative;
  height: 12px;
  padding-left: 11px;
  border-left: 1px dashed #ddd;
}
.catrow li::before {
  content: "";
  position: absolute;
  top: 6px;
  left: 0;
  width: 11px;
  border-top: 1px dashed #ddd;
}
.catrow li.plus::after {
  content: "+";
  position: absolute;
  top: 2px;
  left: -5px;
  width: 9px;
  height: 9px;
  border: 1px solid #c4cad4;
  background: #f2f4f8;
  color: #8a93a3;
  line-height: 7px;
  text-align: center;
}
.catrow span {
  display: inline-block;
  padding: 0 2px;
}
.catrow .sel span {
  background: #0f6cbd;
  color: #fff;
}
.vthumb {
  width: 4px;
  height: 23px;
  margin: 117px 0 0 5px;
  background: #808080;
}
.hthumb {
  display: block;
  width: 92px;
  height: 4px;
  margin: 4px 0 0 14px;
  background: #808080;
}
.dright {
  flex: 1;
  display: flex;
  flex-direction: column;
}
.dright input[type="text"] {
  height: 16px;
  margin: 1px 0 11px;
}
.radio {
  display: flex;
  align-items: center;
  gap: 2px;
  height: 17px;
}
.radio input {
  width: 11px;
  height: 11px;
  accent-color: #0b5da8;
}
.dright .off {
  margin: 2px 0 0 14px;
  color: #b0b0b0;
}
.dright input[type="text"]:disabled {
  height: 14px;
  margin: 3px 0 10px 15px;
  border-color: #e4e4e4;
  background: #efefef;
}
.dright .select {
  margin-top: 4px;
}
.dbuttons {
  display: flex;
  justify-content: flex-end;
  gap: 6px;
  margin: 22px 8px 6px;
}
.dbuttons button {
  width: 69px;
  height: 19px;
  border: 1px solid #d0d0d0;
  border-radius: 3px;
  background: #fdfdfd;
}
.dbuttons .ok {
  border-color: #4a90b8;
}
.grip {
  position: absolute;
  right: 0;
  bottom: 0;
  width: 9px;
  height: 9px;
}
.cursor {
  position: absolute;
  top: 207px;
  left: 65px;
  width: 10px;
  height: 14px;
}
</style>
